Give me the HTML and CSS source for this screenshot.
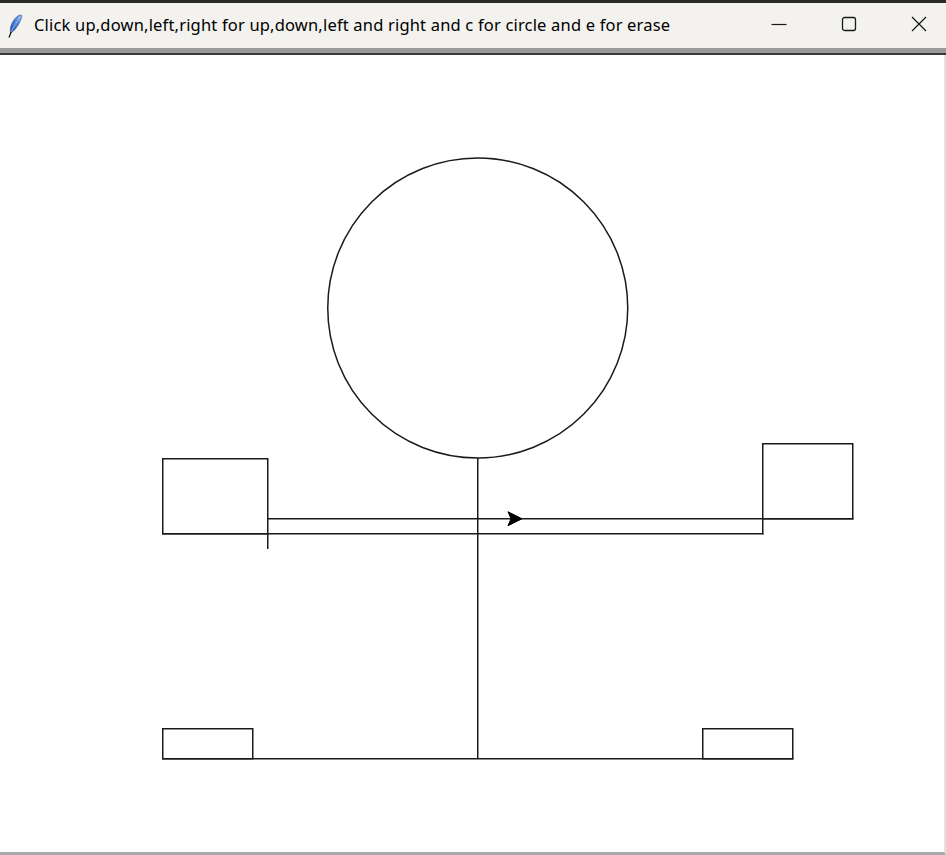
FILE: index.html
```html
<!DOCTYPE html>
<html lang="en">
<head>
<meta charset="utf-8">
<title>Turtle</title>
<link rel="stylesheet" href="styles.css">
</head>
<body>
<div class="window">
  <div class="topstrip"></div>
  <div class="titlebar">
    <svg class="appicon" width="16" height="24" viewBox="0 0 16 24">
      <defs>
        <linearGradient id="fg" x1="0" y1="1" x2="1" y2="0">
          <stop offset="0" stop-color="#1f4fa8"/>
          <stop offset="0.6" stop-color="#4f86de"/>
          <stop offset="1" stop-color="#9cc0f2"/>
        </linearGradient>
      </defs>
      <path d="M3.5 19 C2.5 14 5 7 9.5 3 C11.5 1.3 14 0.6 14.6 1.4 C15.2 2.4 14 5.5 12.2 9 C10.2 13 7 17.5 3.5 19 Z" fill="url(#fg)" stroke="#28457a" stroke-width="0.6"/>
      <path d="M4 18 C6.5 13 9.5 8 13.5 2.5" fill="none" stroke="#b9d3f7" stroke-width="0.7"/>
      <path d="M4 18.5 L2.2 23" stroke="#222" stroke-width="1.4" stroke-linecap="round"/>
    </svg>
    <span class="title">Click up,down,left,right for up,down,left and right and c for circle and e for erase</span>
    <div class="controls">
      <div class="ctl">
        <svg width="16" height="16" viewBox="0 0 16 16"><path d="M0.5 8.5 H15.5" stroke="#1a1a1a" stroke-width="1.2"/></svg>
      </div>
      <div class="ctl">
        <svg width="16" height="16" viewBox="0 0 16 16"><rect x="1.5" y="1.5" width="13" height="13" rx="2" fill="none" stroke="#1a1a1a" stroke-width="1.3"/></svg>
      </div>
      <div class="ctl">
        <svg width="16" height="16" viewBox="0 0 16 16"><path d="M1 1 L15 15 M15 1 L1 15" stroke="#1a1a1a" stroke-width="1.3"/></svg>
      </div>
    </div>
  </div>
  <div class="frameline"></div>
  <div class="canvas">
    <svg class="drawing" width="944" height="797" viewBox="0 55 944 797">
      <g class="ink">
        <circle cx="477.75" cy="308" r="150" />
        <rect x="162.75" y="458.75" width="105" height="75" />
        <line x1="267.75" y1="533" x2="267.75" y2="549" />
        <line x1="267" y1="518.75" x2="853.5" y2="518.75" />
        <rect x="762.75" y="443.75" width="90" height="75" />
        <line x1="762.75" y1="518" x2="762.75" y2="534.5" />
        <line x1="162" y1="533.75" x2="763.5" y2="533.75" />
        <line x1="477.75" y1="458" x2="477.75" y2="759" />
        <line x1="162" y1="758.75" x2="793.5" y2="758.75" />
        <rect x="162.75" y="728.75" width="90" height="30" />
        <rect x="702.75" y="728.75" width="90" height="30" />
      </g>
      <polygon class="turtle" points="522,518.75 508,511.75 511,518.75 508,525.75" />
    </svg>
  </div>
</div>
</body>
</html>
```
FILE: styles.css
```css
html, body {
  margin: 0;
  padding: 0;
  background: #ffffff;
}
body {
  width: 946px;
  height: 855px;
  overflow: hidden;
  font-family: "Noto Sans", "Open Sans", "DejaVu Sans", sans-serif;
}
.window {
  width: 946px;
  height: 855px;
  display: flex;
  flex-direction: column;
  overflow: hidden;
}
.topstrip {
  height: 3px;
  background: #2b2b2b;
  flex: none;
}
.titlebar {
  height: 45px;
  flex: none;
  background: #f3f2ef;
  display: flex;
  align-items: center;
  overflow: hidden;
}
.appicon {
  margin-left: 7px;
  margin-top: 1px;
  flex: none;
}
.title {
  margin-left: 11px;
  font-size: 16.5px;
  letter-spacing: 0.18px;
  color: #000;
  white-space: nowrap;
  margin-top: -3px;
}
.controls {
  margin-left: auto;
  margin-right: -8px;
  display: flex;
  align-self: stretch;
  flex: none;
}
.ctl {
  width: 70px;
  display: flex;
  align-items: center;
  justify-content: center;
  margin-top: -3px;
}
.frameline {
  height: 5px;
  flex: none;
  background: #9a9a9a;
  border-bottom: 2px solid #3a3a3a;
}
.canvas {
  flex: 1;
  background: #ffffff;
  border-right: 2px solid #e2e2e2;
  border-bottom: 3px solid #a8a8a8;
  overflow: hidden;
}
.drawing {
  display: block;
}
.ink circle,
.ink rect,
.ink line {
  fill: none;
  stroke: #1a1a1a;
  stroke-width: 1.5;
}
.turtle {
  fill: #000;
  stroke: #000;
  stroke-width: 1;
}
```
